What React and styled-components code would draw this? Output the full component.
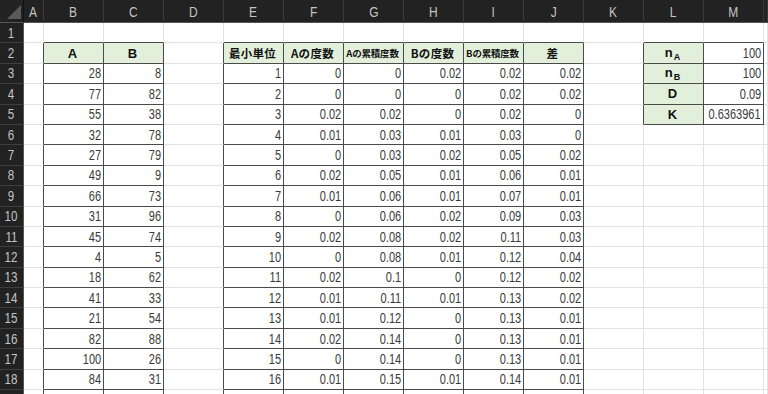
import React from 'react';
import styled, { createGlobalStyle } from 'styled-components';

const GlobalStyle = createGlobalStyle`
html, body { margin:0; padding:0; background:#fff; overflow:hidden; }
`;

const COLS = ['A','B','C','D','E','F','G','H','I','J','K','L','M',''];

const colA = [28,77,55,32,27,49,66,31,45,4,18,41,21,82,100,84];
const colB = [8,82,38,78,79,9,73,96,74,5,62,33,54,88,26,31];
const fA = [0,0,0.02,0.01,0,0.02,0.01,0,0.02,0,0.02,0.01,0.01,0.02,0,0.01];
const cA = [0,0,0.02,0.03,0.03,0.05,0.06,0.06,0.08,0.08,0.1,0.11,0.12,0.14,0.14,0.15];
const fB = [0.02,0,0,0.01,0.02,0.01,0.01,0.02,0.02,0.01,0,0.01,0,0,0,0.01];
const cB = [0.02,0.02,0.02,0.03,0.05,0.06,0.07,0.09,0.11,0.12,0.12,0.13,0.13,0.13,0.13,0.14];
const diff = [0.02,0.02,0,0,0.02,0.01,0.01,0.03,0.03,0.04,0.02,0.02,0.01,0.01,0.01,0.01];

// which cells belong to a bordered table (row 1-based, col index A=0)
const inTable = (r, c) => {
    if (r < 2) return false;
    if ((c === 1 || c === 2) && r <= 19) return true;
    if (c >= 4 && c <= 9 && r <= 19) return true;
    if ((c === 11 || c === 12) && r <= 5) return true;
    return false;
};

const Sub = ({ main, sub }) => (
    <span>{main}<SubText>{sub}</SubText></span>
);

// header row content
const headers = {
    1: { t: 'A' }, 2: { t: 'B' },
    4: { t: '最小単位', jp: true }, 5: { t: 'Aの度数', jp: true },
    6: { t: 'Aの累積度数', jp: true, small: true }, 7: { t: 'Bの度数', jp: true },
    8: { t: 'Bの累積度数', jp: true, small: true }, 9: { t: '差', jp: true },
};

const side = {
    2: [<Sub main="n" sub="A" />, 100],
    3: [<Sub main="n" sub="B" />, 100],
    4: ['D', 0.09],
    5: ['K', 0.6363961],
};

function cellContent(r, c) {
    if (r === 2 && headers[c]) return { ...headers[c], head: true };
    if (side[r] && c === 11) return { t: side[r][0], head: true };
    if (side[r] && c === 12) return { t: side[r][1] };
    const i = r - 3;
    if (i >= 0 && i < 16) {
        const map = { 1: colA, 2: colB, 5: fA, 6: cA, 7: fB, 8: cB, 9: diff };
        if (c === 4) return { t: i + 1 };
        if (map[c]) return { t: map[c][i] };
    }
    return null;
}

function renderContent(content) {
    if (!content) return null;
    if (content.jp) return <JpLabel $small={content.small}>{content.t}</JpLabel>;
    if (content.head) return <Label>{content.t}</Label>;
    return <Num>{content.t}</Num>;
}

export default function App() {
    const rows = [];
    for (let r = 1; r <= 19; r++) rows.push(r);
    return (
        <>
            <GlobalStyle />
            <Sheet>
                <Corner>
                    <svg width="24" height="23" viewBox="0 0 24 23">
                        <polygon points="7,19 21,19 21,5" fill="#5a5a5a" />
                    </svg>
                </Corner>
                {COLS.map((l, i) => <ColHead key={l + i}><HeadText>{l}</HeadText></ColHead>)}
                {rows.map(r => (
                    <React.Fragment key={r}>
                        <RowHead><HeadText>{r}</HeadText></RowHead>
                        {COLS.map((_, c) => {
                            const content = cellContent(r, c);
                            const t = inTable(r, c);
                            return (
                                <Cell
                                    key={c}
                                    $rd={t || inTable(r, c + 1)}
                                    $bd={t || inTable(r + 1, c)}
                                    $fill={t && content && content.head}
                                    $center={content && content.head}
                                >
                                    {renderContent(content)}
                                </Cell>
                            );
                        })}
                    </React.Fragment>
                ))}
            </Sheet>
        </>
    );
}

const Sheet = styled.div`
display:grid;
grid-template-columns:24px 20px repeat(12, 60px) 1fr;
grid-template-rows:23px repeat(19, 20.4px);
width:768px;
height:394px;
overflow:hidden;
font-family:"Liberation Sans", Arial, sans-serif;
font-size:14.5px;
color:#3a3a3a;
`;

const Corner = styled.div`
background:#222;
border-right:1px solid #111;
border-bottom:1px solid #555;
box-sizing:border-box;
svg{ display:block; }
`;

const ColHead = styled.div`
box-sizing:border-box;
background:#222;
color:#c4c4c4;
border-right:1px solid #3a3a3a;
border-bottom:1px solid #555;
display:flex;
align-items:center;
justify-content:center;
font-size:15px;
padding-top:1px;
`;

const RowHead = styled.div`
box-sizing:border-box;
background:#222;
color:#c4c4c4;
border-right:1px solid #555;
border-bottom:1px solid #3e3e3e;
display:flex;
align-items:center;
justify-content:center;
font-size:14.5px;
`;

const HeadText = styled.span`
display:inline-block;
transform:scaleX(0.8);
`;

const Cell = styled.div`
box-sizing:border-box;
border-right:1px solid ${p => p.$rd ? '#4a4a4a' : '#e2e2e2'};
border-bottom:1px solid ${p => p.$bd ? '#4a4a4a' : '#e2e2e2'};
background:${p => p.$fill ? '#e2efda' : '#fff'};
display:flex;
align-items:center;
justify-content:${p => p.$center ? 'center' : 'flex-end'};
padding:0 2px 0 0;
white-space:nowrap;
`;

const Num = styled.span`
display:inline-block;
transform:scaleX(0.76);
transform-origin:right center;
`;

const Label = styled.span`
font-family:"Liberation Sans", Arial, sans-serif;
font-weight:bold;
font-size:13px;
color:#111;
`;

const SubText = styled.sub`
font-size:9px;
vertical-align:-3px;
margin-left:1px;
`;

const JpLabel = styled.span`
font-family:"Noto Sans CJK JP", sans-serif;
font-weight:bold;
font-size:${p => p.$small ? '9.5px' : '11.5px'};
letter-spacing:${p => p.$small ? '-0.2px' : '0.3px'};
color:#111;
`;
